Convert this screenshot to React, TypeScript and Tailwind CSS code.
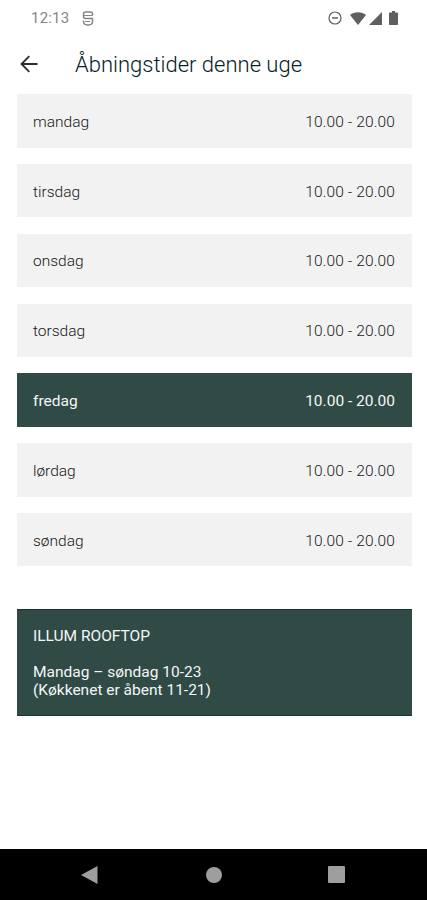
type Day = {
  name: string;
  hours: string;
  today?: boolean;
};

const days: Day[] = [
  { name: 'mandag', hours: '10.00 - 20.00' },
  { name: 'tirsdag', hours: '10.00 - 20.00' },
  { name: 'onsdag', hours: '10.00 - 20.00' },
  { name: 'torsdag', hours: '10.00 - 20.00' },
  { name: 'fredag', hours: '10.00 - 20.00', today: true },
  { name: 'lørdag', hours: '10.00 - 20.00' },
  { name: 'søndag', hours: '10.00 - 20.00' },
];

function StatusBar() {
  return (
    <div className="flex h-9 items-center justify-between pl-[31px] pr-[29px]">
      <div className="flex items-center gap-[13px] text-[#858585]">
        <span className="text-[15px] leading-[18px] tracking-[0.2px]">12:13</span>
        <svg className="h-[15px] w-3" viewBox="0 0 12 15" fill="none" stroke="currentColor" strokeWidth="1.5">
          <path d="M10.500 4.500V3C10.500 1.700 9.800 1 8.500 1h-5C2.200 1 1.500 1.700 1.500 3v2.500c0 1.300.7 2 2 2h7v3.500c0 1.200-.5 1.900-1.500 2.400L6 14.200l-3-.8c-1-.5-1.500-1.200-1.500-2.400V9.500" />
          <path d="M1.500 4.500h9M3 10.500h5" strokeWidth="1" />
        </svg>
      </div>
      <div className="flex items-center text-[#5f5f5f]">
        <svg className="h-[14px] w-[14px]" viewBox="0 0 14 14" fill="none" stroke="currentColor" strokeWidth="1.2">
          <circle cx="7" cy="7" r="6" />
          <path d="M4 7h6" strokeWidth="1.500" />
        </svg>
        <svg className="ml-[8px] h-[13px] w-4" viewBox="0 0 16 13" fill="currentColor">
          <path d="M8 13 0 3C2.200 1.200 5 .3 8 .3s5.800.9 8 2.700z" />
        </svg>
        <svg className="ml-[3px] h-[13px] w-[13px]" viewBox="0 0 13 13" fill="currentColor">
          <path d="M13 0v13H0z" />
        </svg>
        <svg className="ml-[7px] h-[14px] w-[9px]" viewBox="0 0 9 14" fill="currentColor">
          <path d="M3 0h3v1.400h2c.6 0 1 .4 1 1V13c0 .6-.4 1-1 1H1c-.6 0-1-.4-1-1V2.400c0-.6.4-1 1-1h2z" />
        </svg>
      </div>
    </div>
  );
}

function Header() {
  return (
    <header className="flex h-[58px] items-center pl-[20px]">
      <button className="mr-[37px] pb-[3px]" aria-label="Tilbage">
        <svg className="h-[18px] w-[18px] text-[#26302e]" viewBox="0 0 18 18" fill="none" stroke="currentColor" strokeWidth="1.8">
          <path d="M17.500 9H2M9.300 1.200 1.500 9l7.800 7.800" />
        </svg>
      </button>
      <h1 className="text-[22px] font-light leading-[26px] text-[#06231f]">Åbningstider denne uge</h1>
    </header>
  );
}

function DayRow({ day }: { day: Day }) {
  return (
    <li
      className={`flex h-[53.4px] items-center justify-between pl-4 pr-[16.5px] pt-[3px] ${
        day.today ? 'bg-[#304a46] text-[#f4f7f6]' : 'bg-[#f2f2f2] font-light text-[#181818]'
      }`}
    >
      <span>{day.name}</span>
      <span className={day.today ? '' : 'tracking-[0.12px]'}>{day.hours}</span>
    </li>
  );
}

function NavBar() {
  return (
    <nav className="flex h-[51px] items-center bg-black pl-[81px] text-[#9e9e9e]">
      <svg className="h-[18px] w-[17px]" viewBox="0 0 17 18" fill="currentColor">
        <path d="M16.500 0v18L0 9z" />
      </svg>
      <span className="ml-[108px] h-4 w-4 rounded-full bg-[#9e9e9e]" />
      <span className="ml-[106px] h-[17px] w-[17px] rounded-[1px] bg-[#9e9e9e]" />
    </nav>
  );
}

export default function App() {
  return (
    <div className="flex h-[900px] w-[427px] flex-col bg-white font-['Roboto',sans-serif] text-[15.5px]">
      <StatusBar />
      <Header />
      <main className="flex-1 pl-[17px] pr-[15.5px] pt-[0.3px]">
        <ul className="flex flex-col gap-[16.4px]">
          {days.map((day) => (
            <DayRow key={day.name} day={day} />
          ))}
        </ul>
        <section className="mt-[42.300px] h-[107px] border-y border-[#163530] bg-[#304a46] px-4 pt-[17px] leading-[18px] text-[#f4f7f6]">
          <h2>ILLUM ROOFTOP</h2>
          <p className="mt-[18px]">
            Mandag – søndag 10-23
            <br />
            (Køkkenet er åbent 11-21)
          </p>
        </section>
      </main>
      <NavBar />
    </div>
  );
}
